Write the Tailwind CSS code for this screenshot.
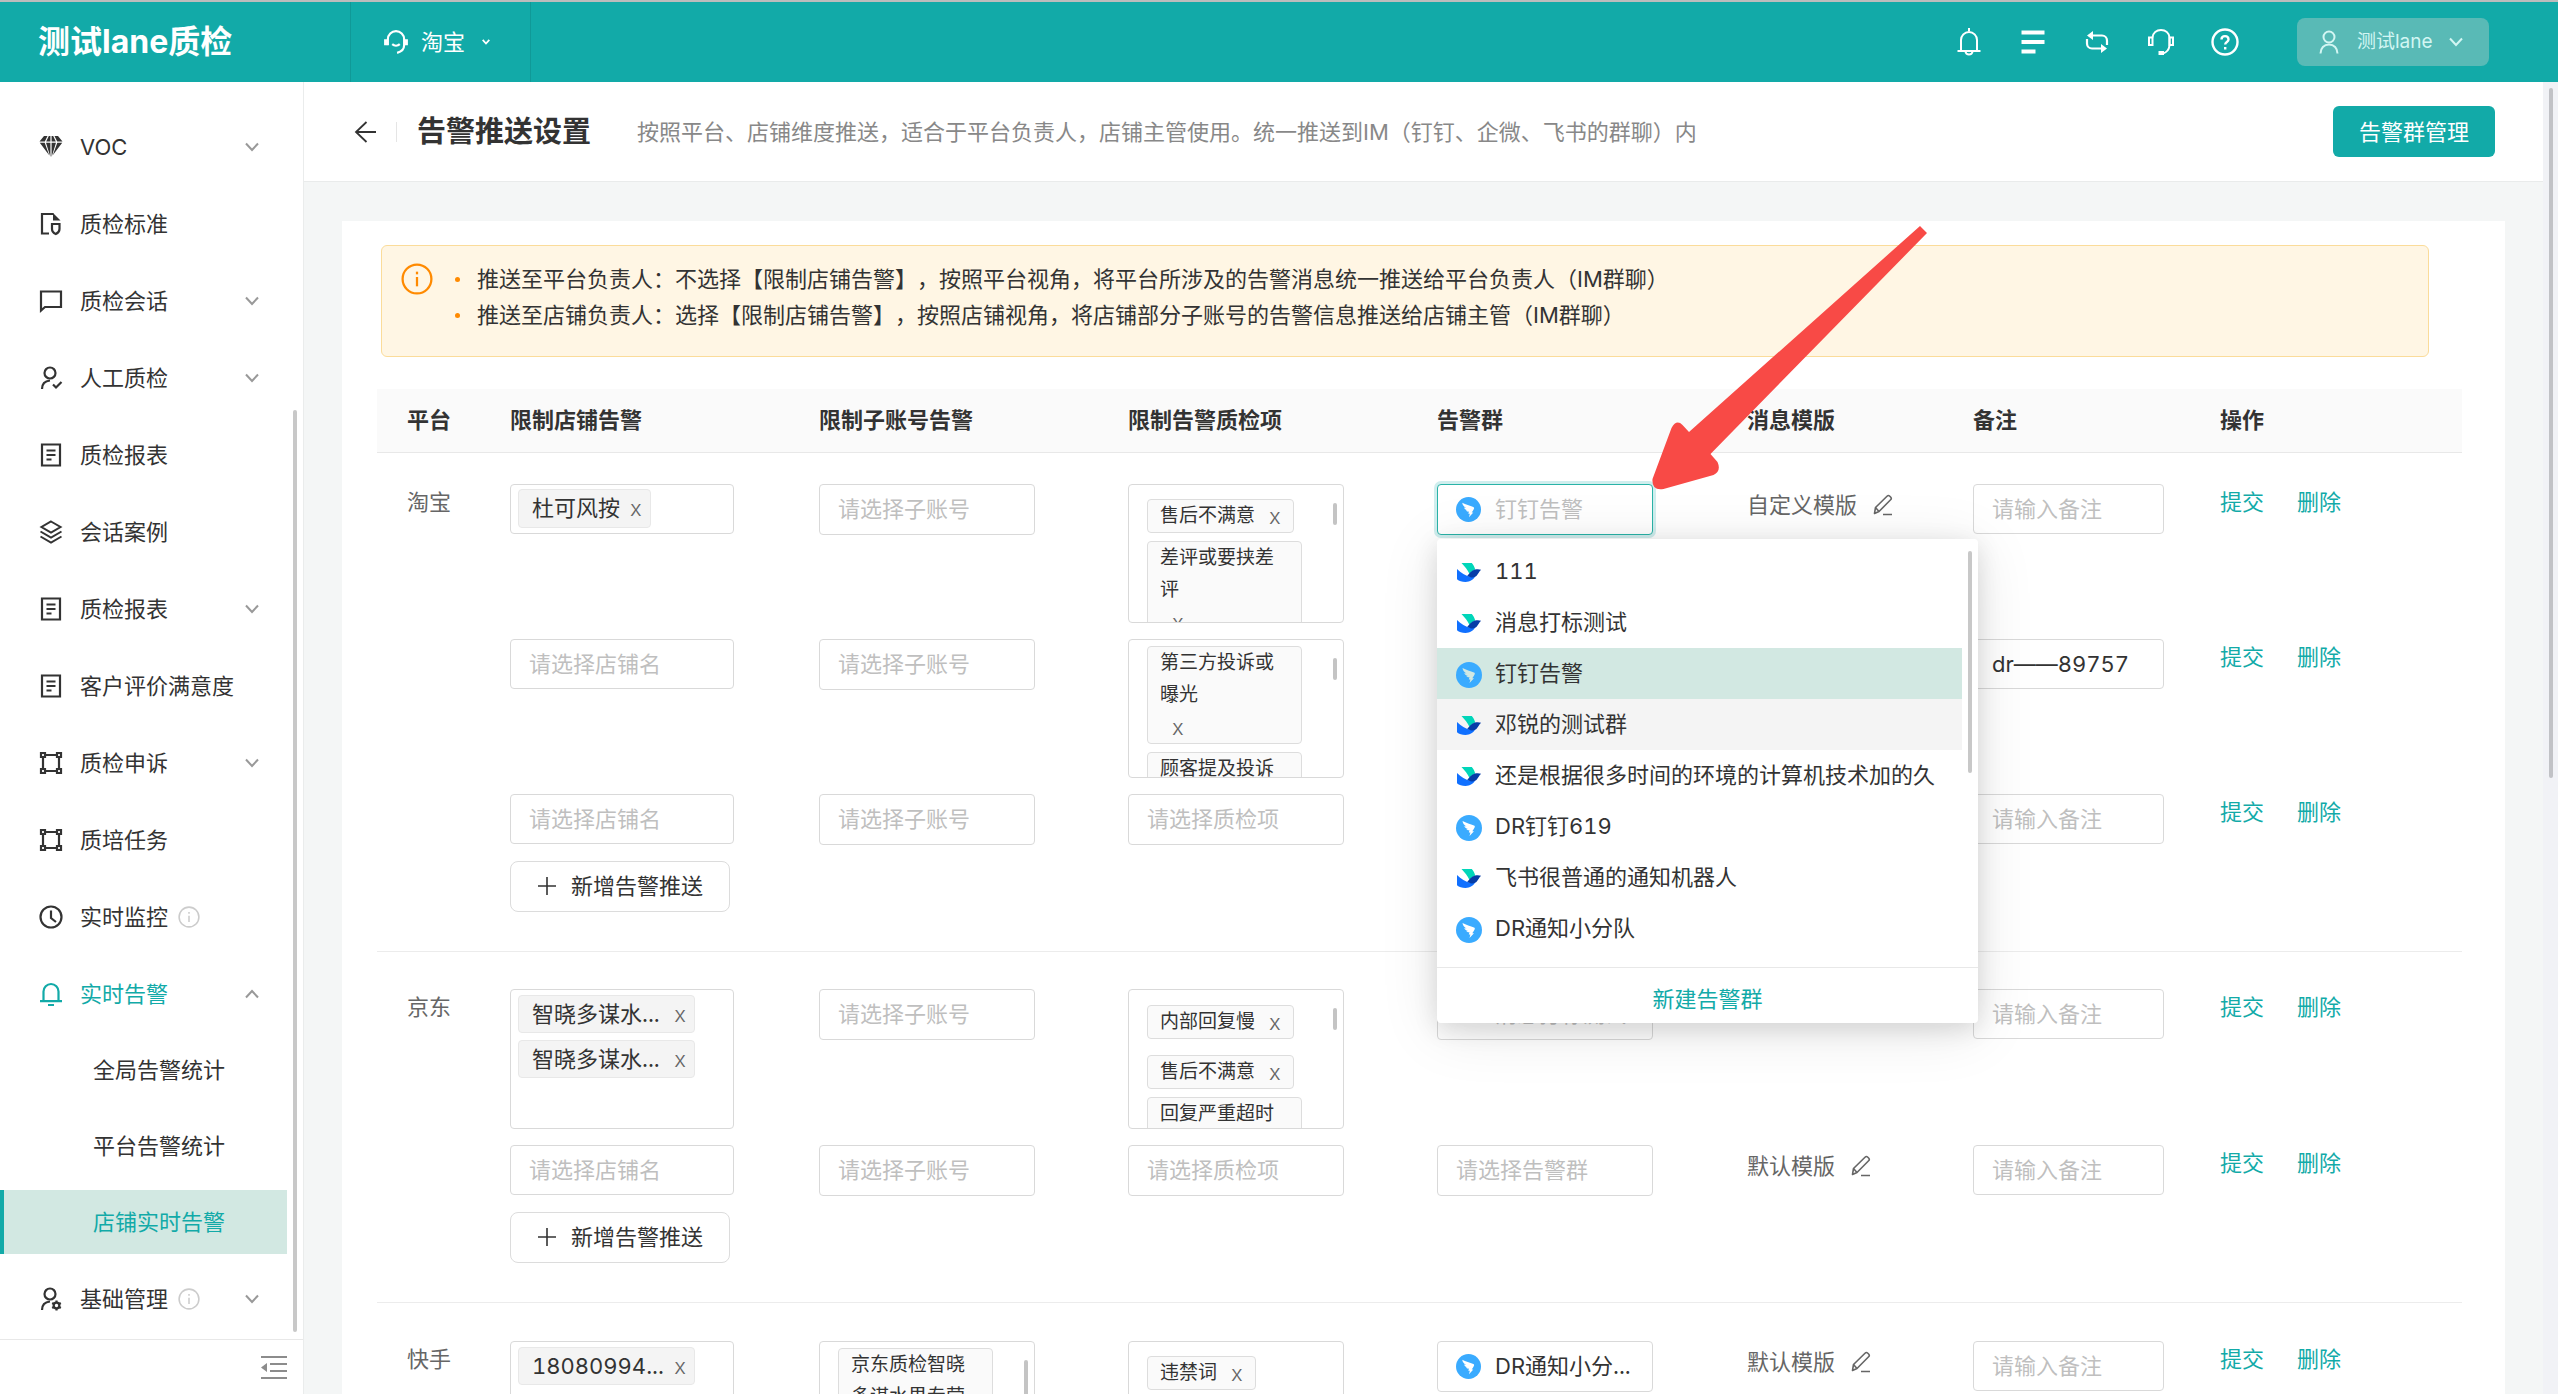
<!DOCTYPE html>
<html lang="zh-CN">
<head>
<meta charset="utf-8">
<meta name="viewport" content="width=device-width, initial-scale=1">
<title>告警推送设置</title>
<script src="https://cdn.jsdelivr.net/npm/@tailwindcss/browser@4"></script>
</head>
<body class="flex h-screen flex-col overflow-hidden bg-[#f4f6f6] font-[Inter,'Noto_Sans_CJK_SC',sans-serif] text-[22px] leading-9 text-[#333] tabular-nums [text-spacing-trim:space-all]">

<!-- Shared icons -->
<svg class="hidden" aria-hidden="true">
  <symbol id="i-down" viewBox="0 0 14 10" fill="none" stroke="currentColor" stroke-width="2"><path d="M1 1.5l6 6.5 6-6.5"/></symbol>
  <symbol id="i-up" viewBox="0 0 14 10" fill="none" stroke="currentColor" stroke-width="2"><path d="M1 8.500l6-6.500 6 6.500"/></symbol>
  <symbol id="i-info" viewBox="0 0 24 24" fill="none" stroke="currentColor" stroke-width="1.700"><circle cx="12" cy="12" r="10.800"/><path d="M12 10.500v7"/><path d="M12 6.500v2"/></symbol>
  <symbol id="i-gem" viewBox="0 0 24 24"><path fill="currentColor" d="M5 1h3.500L5.800 6.500H.5zM9.800 1h1.600v5.500H7.200zM12.600 1h1.600l2.600 5.500h-4.200zM15.500 1H19l4.500 5.500h-5.300zM.8 7.800h4.900l4.500 12.500zM7 7.800h4.400V22zM12.600 7.800H17L12.600 22zM18.300 7.800h4.900l-9.400 12.500z"/></symbol>
  <symbol id="i-std" viewBox="0 0 24 24" fill="none" stroke="currentColor" stroke-width="2.200"><path d="M10 21.500H3V2h11.500"/><path fill="currentColor" stroke="none" d="M14 1l7.500 7.500H14z"/><path d="M13 12h7.500v5c0 2.500-1.500 4-3.700 5-2.300-1-3.800-2.500-3.800-5z"/></symbol>
  <symbol id="i-chat" viewBox="0 0 24 24" fill="none" stroke="currentColor" stroke-width="2.200"><path d="M2 2.500h20V18H6l-4 3.500z"/></symbol>
  <symbol id="i-man" viewBox="0 0 24 24" fill="none" stroke="currentColor" stroke-width="2.200"><circle cx="11" cy="7" r="5.500"/><path d="M3 23c0-5 3-8 8-8.500"/><path d="M14 18.500l3 3 5.500-5.500"/></symbol>
  <symbol id="i-gear" viewBox="0 0 24 24" fill="none" stroke="currentColor" stroke-width="2.200"><circle cx="11" cy="7" r="5.500"/><path d="M3 23c0-5 3-8 8-8.500"/><circle cx="17.500" cy="18.500" r="2.800"/><path d="M17.500 13.500v2M17.500 21.500v2M13.200 16l1.700 1M20.100 20l1.700 1M13.200 21l1.700-1M20.100 17l1.700-1"/></symbol>
  <symbol id="i-doc" viewBox="0 0 24 24" fill="none" stroke="currentColor" stroke-width="2.200"><path d="M3 1.500h18v21H3z"/><path d="M7.500 7.500h9M7.500 12h9M7.500 16.500h5" /></symbol>
  <symbol id="i-layers" viewBox="0 0 24 24" fill="none" stroke="currentColor" stroke-width="2"><path d="M12 1.500l9.500 5.500-9.500 5.500L2.500 7z"/><path d="M1.500 11.500L12 17.500l10.500-6M1.500 16.500L12 22.500l10.500-6"/></symbol>
  <symbol id="i-frame" viewBox="0 0 24 24" fill="none" stroke="currentColor" stroke-width="2.200"><path d="M2 2h4v4H2zM18 2h4v4h-4zM2 18h4v4H2zM18 18h4v4h-4zM6 4h12M6 20h12M4 6v12M20 6v12"/></symbol>
  <symbol id="i-clock" viewBox="0 0 24 24" fill="none" stroke="currentColor" stroke-width="2.200"><circle cx="12" cy="12" r="10.500"/><path d="M12 5.500V13l5 4"/></symbol>
  <symbol id="i-bell" viewBox="0 0 24 24" fill="none" stroke="currentColor" stroke-width="2.200"><path d="M4.500 19V9.500a7.500 7.500 0 0115 0V19"/><path d="M1 19.200h22M9 23h6"/></symbol>
  <symbol id="i-edit" viewBox="0 0 20 22" fill="none" stroke="currentColor" stroke-width="1.600" stroke-linejoin="round"><path d="M1.500 19.500l1-6L14 2.200a2 2 0 012.800 0l.8.800a2 2 0 010 2.800L6 17.500z"/><path d="M2.500 13.500l3.500 4M10 20.500h9"/></symbol>
  <symbol id="i-ding" viewBox="0 0 26 26"><circle cx="13" cy="13" r="13" fill="#3aabff"/><path fill="currentColor" d="M6.500 6c3.500 2 8 3 11.500 4.500.8.400 1 .900.700 1.700-.6 1.500-1.500 2.700-2.400 4h1.700L13.500 21l.9-3.600h-1.600l.7-2.200c-1.500.3-2.500-.2-3.200-1.400l2 .1c-2-.3-3.400-1.200-4-2.900l2.300.5C8.300 10.300 6.800 8.500 6.500 6z"/></symbol>
  <symbol id="i-lark" viewBox="0 0 26 26"><path fill="#00d6b9" d="M5.500 3h10.300c1.700 1.800 2.800 4 3.400 6.500-2.200.8-4 2.600-5.700 4.500C11.500 10 9 6.500 5.500 3z"/><path fill="#1070ff" d="M1 9c4 4 8.500 7 13.500 7.800 2 .2 3.800-.2 5-1-2 4-5.500 6.200-10 6.200-3.500 0-6.500-1-8.500-2.800z"/><path fill="#063da8" d="M11.300 15.700c2-2.300 4.400-5.300 7.700-6.200 2.100-.5 4.100-.5 6.100.3-2.200 2-3 4.500-4.700 6.300-2.400 2-6 1.700-9.100-.4z"/></symbol>
</svg>

<div class="h-0.5 shrink-0 bg-[#bcbcbc]"></div>
<header class="flex h-20 shrink-0 items-center bg-[#12aaa8] pr-[69px] text-white">
  <h1 class="w-[350px] pl-[38px] text-[32px] font-bold">测试lane质检</h1>
  <button type="button" class="flex h-20 w-[181px] items-center border-x border-[#109997] pl-8">
    <svg class="size-[26px]" viewBox="0 0 24 24" fill="none" stroke="currentColor" stroke-width="2"><path d="M4.500 15V9.500a7.500 7.500 0 0115 0V15c0 3.500-2.500 6-6.500 7"/><path stroke-width="3" d="M2.500 9.500V15M21.500 9.500V15"/><path d="M8.500 14c2 1.800 5 1.800 7 0"/></svg>
    <span class="ml-3">淘宝</span>
    <svg class="ml-4 h-1.5 w-2.5" viewBox="0 0 14 10" fill="none" stroke="currentColor" stroke-width="3"><path d="M1.500 1.500l5.500 6 5.500-6"/></svg>
  </button>
  <nav class="ml-auto flex items-center gap-9">
    <button type="button" aria-label="通知"><svg class="size-7" viewBox="0 0 28 28" fill="none" stroke="currentColor" stroke-width="2"><path d="M14 0v3M6 23V12a8 8 0 0116 0v11M2.500 23h23M10.500 23.500a3.500 3 0 007 0"/></svg></button>
    <button type="button" aria-label="列表"><svg class="size-7" viewBox="0 0 28 28" fill="currentColor"><path d="M2.500 2.500h23v4h-23zM2.500 12h23v4h-23zM2.500 21.500h14v4h-14z"/></svg></button>
    <button type="button" aria-label="切换"><svg class="size-7" viewBox="0 0 28 28" fill="none" stroke="currentColor" stroke-width="2.200"><path d="M6 7.500h13a5 5 0 015 5V17M22 20.500H9a5 5 0 01-5-5V11"/><path fill="currentColor" stroke="none" d="M4 7.500l6-4.500v9zM24 20.500l-6-4.500v9z"/></svg></button>
    <button type="button" aria-label="客服"><svg class="size-7" viewBox="0 0 28 28" fill="none" stroke="currentColor" stroke-width="2"><path d="M5.500 9.500C6 5 9.500 2 14 2s8 3 8.500 7.500v8c-.5 4-3 7-6.500 8"/><path d="M2 9.500h3.500V17H2zM22.500 9.500H26V17h-3.500z"/><path fill="currentColor" d="M12.500 24H16v2h-3.500z"/></svg></button>
    <button type="button" aria-label="帮助"><svg class="size-7" viewBox="0 0 28 28" fill="none" stroke="currentColor" stroke-width="2.400"><circle cx="14" cy="14" r="12.500"/><path d="M10.500 11.500c0-4.500 7-4.500 7 0 0 2.500-3.300 2.500-3.300 5M14.200 19v2.500"/></svg></button>
  </nav>
  <button type="button" class="ml-[58px] flex h-12 w-48 items-center rounded-lg bg-[#59bab6] pl-[22px] text-[19px] text-[#d3f6f3]">
    <svg class="h-6 w-5" viewBox="0 0 20 24" fill="none" stroke="currentColor" stroke-width="2"><circle cx="10" cy="7" r="5.500"/><path d="M1.500 23.500c0-5.500 3.500-9 8.500-9s8.500 3.500 8.500 9"/></svg>
    <span class="ml-[18px]">测试lane</span>
    <svg class="ml-4 h-2.5 w-3.5"><use href="#i-down"/></svg>
  </button>
</header>

<div class="flex min-h-0 flex-1">
  <!-- Sidebar -->
  <aside class="flex w-[304px] shrink-0 flex-col border-r border-[#eaecec] bg-white">
    <div class="relative min-h-0 flex-1 overflow-hidden pr-4 pt-[33px]">
      <ul class="flex flex-col gap-[13px]">
        <li><a href="#" class="flex h-16 items-center pl-[39px] pr-7"><svg class="size-6"><use href="#i-gem"/></svg><span class="ml-[17px]">VOC</span><svg class="ml-auto h-2.5 w-3.5 text-[#999]"><use href="#i-down"/></svg></a></li>
        <li><a href="#" class="flex h-16 items-center pl-[39px] pr-7"><svg class="size-6"><use href="#i-std"/></svg><span class="ml-[17px]">质检标准</span></a></li>
        <li><a href="#" class="flex h-16 items-center pl-[39px] pr-7"><svg class="size-6"><use href="#i-chat"/></svg><span class="ml-[17px]">质检会话</span><svg class="ml-auto h-2.5 w-3.5 text-[#999]"><use href="#i-down"/></svg></a></li>
        <li><a href="#" class="flex h-16 items-center pl-[39px] pr-7"><svg class="size-6"><use href="#i-man"/></svg><span class="ml-[17px]">人工质检</span><svg class="ml-auto h-2.5 w-3.5 text-[#999]"><use href="#i-down"/></svg></a></li>
        <li><a href="#" class="flex h-16 items-center pl-[39px] pr-7"><svg class="size-6"><use href="#i-doc"/></svg><span class="ml-[17px]">质检报表</span></a></li>
        <li><a href="#" class="flex h-16 items-center pl-[39px] pr-7"><svg class="size-6"><use href="#i-layers"/></svg><span class="ml-[17px]">会话案例</span></a></li>
        <li><a href="#" class="flex h-16 items-center pl-[39px] pr-7"><svg class="size-6"><use href="#i-doc"/></svg><span class="ml-[17px]">质检报表</span><svg class="ml-auto h-2.5 w-3.5 text-[#999]"><use href="#i-down"/></svg></a></li>
        <li><a href="#" class="flex h-16 items-center pl-[39px] pr-7"><svg class="size-6"><use href="#i-doc"/></svg><span class="ml-[17px]">客户评价满意度</span></a></li>
        <li><a href="#" class="flex h-16 items-center pl-[39px] pr-7"><svg class="size-6"><use href="#i-frame"/></svg><span class="ml-[17px]">质检申诉</span><svg class="ml-auto h-2.5 w-3.5 text-[#999]"><use href="#i-down"/></svg></a></li>
        <li><a href="#" class="flex h-16 items-center pl-[39px] pr-7"><svg class="size-6"><use href="#i-frame"/></svg><span class="ml-[17px]">质培任务</span></a></li>
        <li><a href="#" class="flex h-16 items-center pl-[39px] pr-7"><svg class="size-6"><use href="#i-clock"/></svg><span class="ml-[17px]">实时监控</span><svg class="ml-2.5 size-[22px] text-[#ccc]"><use href="#i-info"/></svg></a></li>
        <li>
          <a href="#" class="flex h-16 items-center pl-[39px] pr-7 text-[#12aaa8]"><svg class="size-6"><use href="#i-bell"/></svg><span class="ml-[17px]">实时告警</span><svg class="ml-auto h-2.5 w-3.5 text-[#999]"><use href="#i-up"/></svg></a>
          <ul class="mt-3 flex flex-col gap-3">
            <li><a href="#" class="flex h-16 items-center pl-[93px]">全局告警统计</a></li>
            <li><a href="#" class="flex h-16 items-center pl-[93px]">平台告警统计</a></li>
            <li><a href="#" aria-current="page" class="flex h-16 items-center border-l-4 border-[#12aaa8] bg-[#d2e8e2] pl-[89px] text-[#12aaa8]">店铺实时告警</a></li>
          </ul>
        </li>
        <li><a href="#" class="flex h-16 items-center pl-[39px] pr-7"><svg class="size-6"><use href="#i-gear"/></svg><span class="ml-[17px]">基础管理</span><svg class="ml-2.5 size-[22px] text-[#ccc]"><use href="#i-info"/></svg><svg class="ml-auto h-2.5 w-3.5 text-[#999]"><use href="#i-down"/></svg></a></li>
      </ul>
      <div class="absolute bottom-[7px] right-1.5 top-[328px] w-1 rounded-full bg-[#c8c8c8]"></div>
    </div>
    <div class="flex h-[55px] shrink-0 items-center justify-end border-t border-[#e8e8e8] pr-4">
      <button type="button" aria-label="收起菜单" class="text-[#8c8c8c]"><svg class="h-6 w-[26px]" viewBox="0 0 26 24" fill="currentColor"><path d="M0 1h26v2H0zM9 8h17v2H9zM9 15h17v2H9zM0 22h26v2H0zM0 12.500L6 8v9z"/></svg></button>
    </div>
  </aside>

  <main class="min-w-0 flex-1 overflow-hidden">
    <div class="flex h-[100px] items-center border-b border-[#e9ebeb] bg-white pl-[50px] pr-12">
      <button type="button" aria-label="返回"><svg class="size-[22px]" viewBox="0 0 22 22" fill="none" stroke="currentColor" stroke-width="1.800"><path d="M12.500 1L2 11l10.500 10M2 11h20"/></svg></button>
      <span class="ml-5 h-5 w-px bg-[#e5e5e5]"></span>
      <h2 class="ml-5 text-[29px] font-bold">告警推送设置</h2>
      <p class="ml-[46px] text-[#888]">按照平台、店铺维度推送，适合于平台负责人，店铺主管使用。统一推送到IM（钉钉、企微、飞书的群聊）内</p>
      <button type="button" class="ml-auto h-[51px] w-[162px] rounded-md bg-[#12aaa8] text-white">告警群管理</button>
    </div>

    <section class="mx-[38px] mt-[39px] bg-white pb-10 pt-6">
      <div class="ml-[39px] mr-[76px] flex h-28 rounded-md border border-[#fbdc9a] bg-[#fff6e4] pl-[19px] pt-[15px]">
        <svg class="mt-0.5 size-8 text-[#ff8a00]"><use href="#i-info"/></svg>
        <ul class="ml-[22px]">
          <li class="flex items-center"><span class="mr-[17px] size-[5px] rounded-full bg-[#ff8a00]"></span>推送至平台负责人：不选择【限制店铺告警】，按照平台视角，将平台所涉及的告警消息统一推送给平台负责人（IM群聊）</li>
          <li class="flex items-center"><span class="mr-[17px] size-[5px] rounded-full bg-[#ff8a00]"></span>推送至店铺负责人：选择【限制店铺告警】，按照店铺视角，将店铺部分子账号的告警信息推送给店铺主管（IM群聊）</li>
        </ul>
      </div>

      <div class="ml-[35px] mr-[43px] mt-8">
        <table class="w-full table-fixed">
          <colgroup>
            <col class="w-[133px]"><col class="w-[309px]"><col class="w-[309px]"><col class="w-[309px]"><col class="w-[310px]"><col class="w-[226px]"><col class="w-[247px]"><col>
          </colgroup>
          <thead>
            <tr class="h-[63px] border-b border-[#e8e8e8] bg-[#fafafa] text-left">
              <th scope="col" class="pl-[30px] font-semibold">平台</th>
              <th scope="col" class="font-semibold">限制店铺告警</th>
              <th scope="col" class="font-semibold">限制子账号告警</th>
              <th scope="col" class="font-semibold">限制告警质检项</th>
              <th scope="col" class="font-semibold">告警群</th>
              <th scope="col" class="font-semibold">消息模版</th>
              <th scope="col" class="font-semibold">备注</th>
              <th scope="col" class="font-semibold">操作</th>
            </tr>
          </thead>

          <!-- 淘宝 -->
          <tbody>
            <tr class="align-top">
              <td class="pl-[30px] pt-[31px] text-[#666]">淘宝</td>
              <td class="pt-[31px]">
                <div class="h-[50px] w-56 rounded border border-[#d9d9d9] bg-white pl-[7px] pt-1">
                  <span class="inline-flex h-[39px] items-center rounded-sm border border-[#e8e8e8] bg-[#f4f4f4] pl-[13px] pr-2">杜可风按<button type="button" class="ml-2.5 text-[22px] font-light text-[#666]" aria-label="移除">x</button></span>
                </div>
              </td>
              <td class="pt-[31px]"><input aria-label="子账号" placeholder="请选择子账号" class="block h-[51px] w-[216px] rounded border border-[#d9d9d9] bg-white pl-[18px] placeholder:text-[#bfbfbf]"></td>
              <td class="pb-4 pt-[31px]">
                <div class="relative h-[139px] w-[216px] overflow-hidden rounded border border-[#d9d9d9] bg-white pl-[18px] text-[19px] leading-8">
                  <div class="mt-3.5 flex h-[34px] w-fit items-center rounded-sm border border-[#ddd] bg-[#fafafa] px-3">售后不满意<button type="button" class="ml-3.5 text-[22px] font-light text-[#666]" aria-label="移除">x</button></div>
                  <div class="mt-2 w-[155px] rounded-sm border border-[#ddd] bg-[#fafafa] px-3">差评或要挟差评<button type="button" class="ml-3 block text-[22px] font-light text-[#666]" aria-label="移除">x</button></div>
                  <span class="absolute right-1.5 top-[18px] h-[22px] w-1 rounded-full bg-[#c4c4c4]"></span>
                </div>
              </td>
              <td class="pt-[31px]">
                <div class="relative w-[216px]">
                  <button type="button" aria-haspopup="listbox" aria-expanded="true" class="flex h-[51px] w-full items-center rounded-sm border border-[#2ab3a8] bg-white pl-[18px] text-[#bfbfbf] ring-3 ring-[#12aaa8]/20"><svg class="size-[25px] text-white"><use href="#i-ding"/></svg><span class="ml-3.5">钉钉告警</span></button>

                  <!-- Group picker menu -->
                  <div class="absolute left-0 top-[55px] z-10 h-[484px] w-[541px] rounded bg-white pt-[7px] shadow-[0_8px_60px_rgba(0,0,0,0.1),0_6px_24px_rgba(0,0,0,0.12)]">
                    <ul role="listbox" aria-label="告警群" class="mr-4 h-[421px]">
                      <li role="option" class="flex h-[51px] items-center pl-[19px]"><svg class="mt-1 size-[26px]"><use href="#i-lark"/></svg><span class="ml-[13px]">111</span></li>
                      <li role="option" class="flex h-[51px] items-center pl-[19px]"><svg class="mt-1 size-[26px]"><use href="#i-lark"/></svg><span class="ml-[13px]">消息打标测试</span></li>
                      <li role="option" aria-selected="true" class="flex h-[51px] items-center bg-[#d2e8e2] pl-[19px]"><svg class="mt-1 size-[26px] text-[#d2e8e2]"><use href="#i-ding"/></svg><span class="ml-[13px]">钉钉告警</span></li>
                      <li role="option" class="flex h-[51px] items-center bg-[#f4f4f4] pl-[19px]"><svg class="mt-1 size-[26px]"><use href="#i-lark"/></svg><span class="ml-[13px]">邓锐的测试群</span></li>
                      <li role="option" class="flex h-[51px] items-center pl-[19px]"><svg class="mt-1 size-[26px]"><use href="#i-lark"/></svg><span class="ml-[13px] whitespace-nowrap">还是根据很多时间的环境的计算机技术加的久</span></li>
                      <li role="option" class="flex h-[51px] items-center pl-[19px]"><svg class="mt-1 size-[26px] text-white"><use href="#i-ding"/></svg><span class="ml-[13px]">DR钉钉619</span></li>
                      <li role="option" class="flex h-[51px] items-center pl-[19px]"><svg class="mt-1 size-[26px]"><use href="#i-lark"/></svg><span class="ml-[13px]">飞书很普通的通知机器人</span></li>
                      <li role="option" class="flex h-[51px] items-center pl-[19px]"><svg class="mt-1 size-[26px] text-white"><use href="#i-ding"/></svg><span class="ml-[13px]">DR通知小分队</span></li>
                    </ul>
                    <button type="button" class="flex h-14 w-full items-center justify-center border-t border-[#e8e8e8] pt-2 text-[#12aaa8]">新建告警群</button>
                    <span class="absolute right-1.5 top-3 h-[222px] w-1 rounded-full bg-[#c8c8c8]"></span>
                  </div>

                  <!-- Pointer arrow -->
                  <svg class="absolute left-[213px] top-[-265px] z-20 h-[280px] w-[290px] max-w-none" viewBox="1650 220 290 280"><path fill="#f84a46" d="M1920 227l7 7L1710.500 455l7 8q4 9-4 13l-50 14q-12 2-11-10l19-51q5-9 11-3l6.500 7z"/></svg>
                </div>
              </td>
              <td class="pt-[31px]"><div class="flex h-[42px] items-center text-[#666]">自定义模版<button type="button" aria-label="编辑模版" class="ml-4"><svg class="h-[22px] w-5"><use href="#i-edit"/></svg></button></div></td>
              <td class="pt-[31px]"><input aria-label="备注" placeholder="请输入备注" class="block h-[50px] w-[191px] rounded border border-[#d9d9d9] bg-white pl-[18px] placeholder:text-[#bfbfbf]"></td>
              <td class="pt-[31px]"><div class="flex gap-[33px] text-[#12aaa8]"><a href="#">提交</a><a href="#">删除</a></div></td>
            </tr>
            <tr class="align-top">
              <td></td>
              <td><input aria-label="店铺名" placeholder="请选择店铺名" class="block h-[50px] w-56 rounded border border-[#d9d9d9] bg-white pl-[18px] placeholder:text-[#bfbfbf]"></td>
              <td><input aria-label="子账号" placeholder="请选择子账号" class="block h-[51px] w-[216px] rounded border border-[#d9d9d9] bg-white pl-[18px] placeholder:text-[#bfbfbf]"></td>
              <td class="pb-4">
                <div class="relative h-[139px] w-[216px] overflow-hidden rounded border border-[#d9d9d9] bg-white pl-[18px] text-[19px] leading-8">
                  <div class="mt-1.5 w-[155px] rounded-sm border border-[#ddd] bg-[#fafafa] px-3">第三方投诉或曝光<button type="button" class="ml-3 block text-[22px] font-light text-[#666]" aria-label="移除">x</button></div>
                  <div class="mt-2 w-[155px] rounded-sm border border-[#ddd] bg-[#fafafa] px-3">顾客提及投诉<button type="button" class="ml-3 block text-[22px] font-light text-[#666]" aria-label="移除">x</button></div>
                  <span class="absolute right-1.5 top-[18px] h-[22px] w-1 rounded-full bg-[#c4c4c4]"></span>
                </div>
              </td>
              <td></td>
              <td></td>
              <td><input aria-label="备注" value="dr——89757" class="block h-[50px] w-[191px] rounded border border-[#d9d9d9] bg-white pl-[18px]"></td>
              <td><div class="flex gap-[33px] text-[#12aaa8]"><a href="#">提交</a><a href="#">删除</a></div></td>
            </tr>
            <tr class="align-top">
              <td></td>
              <td class="pb-4"><input aria-label="店铺名" placeholder="请选择店铺名" class="block h-[50px] w-56 rounded border border-[#d9d9d9] bg-white pl-[18px] placeholder:text-[#bfbfbf]"></td>
              <td class="pb-4"><input aria-label="子账号" placeholder="请选择子账号" class="block h-[51px] w-[216px] rounded border border-[#d9d9d9] bg-white pl-[18px] placeholder:text-[#bfbfbf]"></td>
              <td class="pb-4"><input aria-label="质检项" placeholder="请选择质检项" class="block h-[51px] w-[216px] rounded border border-[#d9d9d9] bg-white pl-[18px] placeholder:text-[#bfbfbf]"></td>
              <td></td>
              <td></td>
              <td><input aria-label="备注" placeholder="请输入备注" class="block h-[50px] w-[191px] rounded border border-[#d9d9d9] bg-white pl-[18px] placeholder:text-[#bfbfbf]"></td>
              <td><div class="flex gap-[33px] text-[#12aaa8]"><a href="#">提交</a><a href="#">删除</a></div></td>
            </tr>
            <tr class="border-b border-[#ececec]">
              <td></td>
              <td colspan="7" class="pb-[39px]"><button type="button" class="flex h-[51px] w-[220px] items-center rounded-lg border border-[#dcdcdc] bg-white pl-[27px]"><svg class="size-[18px]" viewBox="0 0 18 18" stroke="currentColor" stroke-width="1.600"><path d="M0 9h18M9 0v18"/></svg><span class="ml-[15px]">新增告警推送</span></button></td>
            </tr>
          </tbody>

          <!-- 京东 -->
          <tbody>
            <tr class="align-top">
              <td class="pl-[30px] pt-[37px] text-[#666]">京东</td>
              <td class="pt-[37px]">
                <div class="flex h-[140px] w-56 flex-col gap-[7px] rounded border border-[#d9d9d9] bg-white pl-[7px] pt-[5px]">
                  <span class="flex h-[38px] w-[177px] items-center justify-between rounded-sm border border-[#e8e8e8] bg-[#f4f4f4] pl-[13px] pr-2">智晓多谋水...<button type="button" class="text-[22px] font-light text-[#666]" aria-label="移除">x</button></span>
                  <span class="flex h-[38px] w-[177px] items-center justify-between rounded-sm border border-[#e8e8e8] bg-[#f4f4f4] pl-[13px] pr-2">智晓多谋水...<button type="button" class="text-[22px] font-light text-[#666]" aria-label="移除">x</button></span>
                </div>
              </td>
              <td class="pt-[37px]"><input aria-label="子账号" placeholder="请选择子账号" class="block h-[51px] w-[216px] rounded border border-[#d9d9d9] bg-white pl-[18px] placeholder:text-[#bfbfbf]"></td>
              <td class="pb-4 pt-[37px]">
                <div class="relative h-[140px] w-[216px] overflow-hidden rounded border border-[#d9d9d9] bg-white pl-[18px] text-[19px] leading-8">
                  <div class="mt-[15px] flex h-[34px] w-fit items-center rounded-sm border border-[#ddd] bg-[#fafafa] px-3">内部回复慢<button type="button" class="ml-3.5 text-[22px] font-light text-[#666]" aria-label="移除">x</button></div>
                  <div class="mt-4 flex h-[34px] w-fit items-center rounded-sm border border-[#ddd] bg-[#fafafa] px-3">售后不满意<button type="button" class="ml-3.5 text-[22px] font-light text-[#666]" aria-label="移除">x</button></div>
                  <div class="mt-2 w-[155px] rounded-sm border border-[#ddd] bg-[#fafafa] px-3">回复严重超时<button type="button" class="ml-3 block text-[22px] font-light text-[#666]" aria-label="移除">x</button></div>
                  <span class="absolute right-1.5 top-[18px] h-[22px] w-1 rounded-full bg-[#c4c4c4]"></span>
                </div>
              </td>
              <td class="pt-[37px]"><button type="button" aria-haspopup="listbox" class="flex h-[51px] w-[216px] items-center rounded border border-[#d9d9d9] bg-white pl-[18px] text-[#bfbfbf]"><svg class="size-[26px]"><use href="#i-lark"/></svg><span class="ml-[13px]">消息打标测试</span></button></td>
              <td></td>
              <td class="pt-[37px]"><input aria-label="备注" placeholder="请输入备注" class="block h-[50px] w-[191px] rounded border border-[#d9d9d9] bg-white pl-[18px] placeholder:text-[#bfbfbf]"></td>
              <td class="pt-[37px]"><div class="flex gap-[33px] text-[#12aaa8]"><a href="#">提交</a><a href="#">删除</a></div></td>
            </tr>
            <tr class="align-top">
              <td></td>
              <td class="pb-4"><input aria-label="店铺名" placeholder="请选择店铺名" class="block h-[50px] w-56 rounded border border-[#d9d9d9] bg-white pl-[18px] placeholder:text-[#bfbfbf]"></td>
              <td class="pb-4"><input aria-label="子账号" placeholder="请选择子账号" class="block h-[51px] w-[216px] rounded border border-[#d9d9d9] bg-white pl-[18px] placeholder:text-[#bfbfbf]"></td>
              <td class="pb-4"><input aria-label="质检项" placeholder="请选择质检项" class="block h-[51px] w-[216px] rounded border border-[#d9d9d9] bg-white pl-[18px] placeholder:text-[#bfbfbf]"></td>
              <td class="pb-4"><input aria-label="告警群" placeholder="请选择告警群" class="block h-[51px] w-[216px] rounded border border-[#d9d9d9] bg-white pl-[18px] placeholder:text-[#bfbfbf]"></td>
              <td><div class="flex h-[42px] items-center text-[#666]">默认模版<button type="button" aria-label="编辑模版" class="ml-4"><svg class="h-[22px] w-5"><use href="#i-edit"/></svg></button></div></td>
              <td><input aria-label="备注" placeholder="请输入备注" class="block h-[50px] w-[191px] rounded border border-[#d9d9d9] bg-white pl-[18px] placeholder:text-[#bfbfbf]"></td>
              <td><div class="flex gap-[33px] text-[#12aaa8]"><a href="#">提交</a><a href="#">删除</a></div></td>
            </tr>
            <tr class="border-b border-[#ececec]">
              <td></td>
              <td colspan="7" class="pb-[39px]"><button type="button" class="flex h-[51px] w-[220px] items-center rounded-lg border border-[#dcdcdc] bg-white pl-[27px]"><svg class="size-[18px]" viewBox="0 0 18 18" stroke="currentColor" stroke-width="1.600"><path d="M0 9h18M9 0v18"/></svg><span class="ml-[15px]">新增告警推送</span></button></td>
            </tr>
          </tbody>

          <!-- 快手 -->
          <tbody>
            <tr class="align-top">
              <td class="pl-[30px] pt-[38px] text-[#666]">快手</td>
              <td class="pt-[38px]">
                <div class="h-[140px] w-56 rounded border border-[#d9d9d9] bg-white pl-[7px] pt-[5px]">
                  <span class="flex h-[38px] w-[177px] items-center justify-between rounded-sm border border-[#e8e8e8] bg-[#f4f4f4] pl-[13px] pr-2">18080994...<button type="button" class="text-[22px] font-light text-[#666]" aria-label="移除">x</button></span>
                </div>
              </td>
              <td class="pt-[38px]">
                <div class="relative h-[140px] w-[216px] overflow-hidden rounded border border-[#d9d9d9] bg-white pl-[18px] text-[19px] leading-8">
                  <div class="mt-1.5 w-[155px] rounded-sm border border-[#ddd] bg-[#fafafa] px-3">京东质检智晓多谋水果专营店</div>
                  <span class="absolute right-1.5 top-[18px] h-[60px] w-1 rounded-full bg-[#c4c4c4]"></span>
                </div>
              </td>
              <td class="pb-4 pt-[38px]">
                <div class="h-[140px] w-[216px] overflow-hidden rounded border border-[#d9d9d9] bg-white pl-[18px] text-[19px] leading-8">
                  <div class="mt-3.5 flex h-[34px] w-fit items-center rounded-sm border border-[#ddd] bg-[#fafafa] px-3">违禁词<button type="button" class="ml-3.5 text-[22px] font-light text-[#666]" aria-label="移除">x</button></div>
                </div>
              </td>
              <td class="pt-[38px]"><button type="button" aria-haspopup="listbox" class="flex h-[51px] w-[216px] items-center rounded border border-[#d9d9d9] bg-white pl-[18px]"><svg class="size-[25px] text-white"><use href="#i-ding"/></svg><span class="ml-3.5">DR通知小分...</span></button></td>
              <td class="pt-[38px]"><div class="flex h-[42px] items-center text-[#666]">默认模版<button type="button" aria-label="编辑模版" class="ml-4"><svg class="h-[22px] w-5"><use href="#i-edit"/></svg></button></div></td>
              <td class="pt-[38px]"><input aria-label="备注" placeholder="请输入备注" class="block h-[50px] w-[191px] rounded border border-[#d9d9d9] bg-white pl-[18px] placeholder:text-[#bfbfbf]"></td>
              <td class="pt-[38px]"><div class="flex gap-[33px] text-[#12aaa8]"><a href="#">提交</a><a href="#">删除</a></div></td>
            </tr>
          </tbody>
        </table>
      </div>
    </section>
  </main>

  <!-- Page scroll track -->
  <div class="w-[15px] shrink-0 bg-[#f1f2f6] pl-1.5 pt-1.5"><div class="h-[690px] w-1 rounded-full bg-[#c1c2c6]"></div></div>
</div>
</body>
</html>
